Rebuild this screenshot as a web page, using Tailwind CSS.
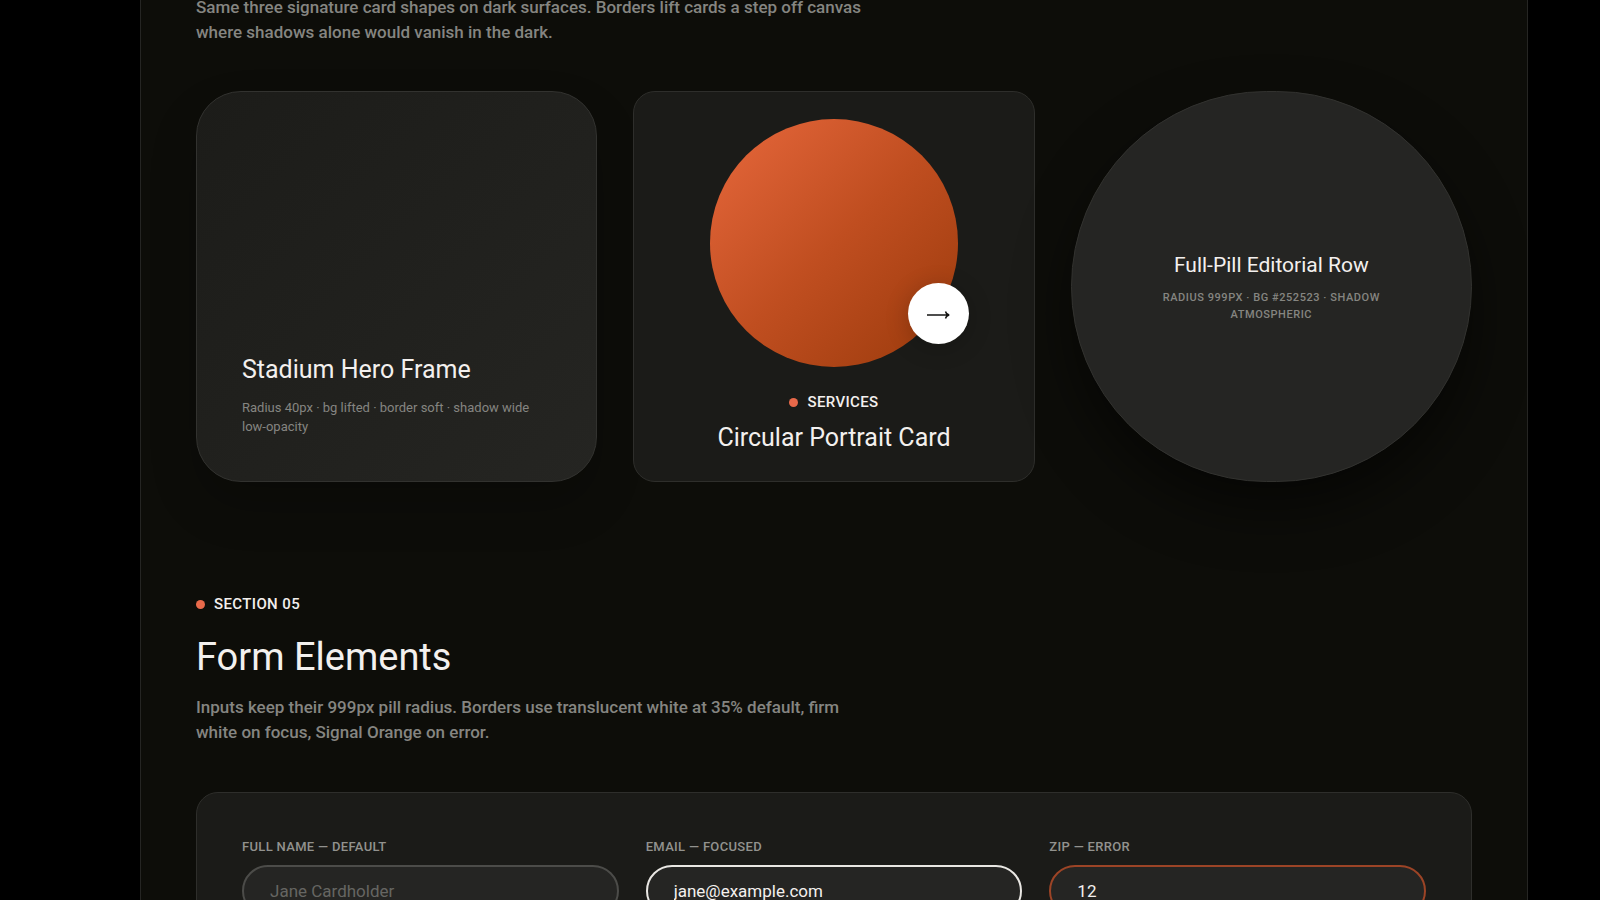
<!DOCTYPE html>
<html lang="en">
<head>
    <meta charset="UTF-8">
    <meta name="viewport" content="width=device-width, initial-scale=1.0">
    <title>Design System - Dark</title>
    <script src="https://cdn.jsdelivr.net/npm/@tailwindcss/browser@4"></script>
</head>
<body class="bg-black font-[Roboto,sans-serif] text-[#f3f0ee] antialiased">
    <main class="ml-[140px] mr-[72px] min-h-screen border-x border-[#252523] bg-[#0d0d09] px-[55px] overflow-hidden">

        <!-- Cards -->
        <section class="-mt-[5px] pb-[113px]">
            <p class="max-w-[680px] mb-[46px] text-[17px] leading-[25px] font-medium text-[#858581]">Same three signature card shapes on dark surfaces. Borders lift cards a step off canvas where shadows alone would vanish in the dark.</p>
            <div class="grid grid-cols-3 gap-9">
                <article class="flex flex-col justify-end rounded-[45px] border border-[#32322f] bg-linear-to-br from-[#1c1c19] to-[#252522] p-[45px] shadow-[0_24px_48px_rgba(0,0,0,0.2)]">
                    <h3 class="mb-3 text-[25px] leading-8">Stadium Hero Frame</h3>
                    <p class="text-[13px] leading-[19px] text-[#858581]">Radius 40px · bg lifted · border soft · shadow wide low-opacity</p>
                </article>
                <article class="flex flex-col items-center rounded-[22px] border border-[#2e2e2b] bg-[#1b1b18] px-[27px] pt-[27px] pb-[25px]">
                    <div class="relative mb-[26px] size-[248px] rounded-full bg-linear-to-br from-[#e8683c] via-[#c04e20] to-[#9a3a0a]">
                        <button type="button" aria-label="Open services" class="absolute bottom-[23px] -right-[11px] flex size-[61px] items-center justify-center rounded-full bg-white shadow-[0_4px_24px_rgba(0,0,0,0.2)]">
                            <svg class="size-6" viewBox="0 0 24 24" fill="none" stroke="#141413" stroke-width="1.4">
                                <path d="M1 13H23M19.500 9.500C20 11.300 21.200 12.600 23.200 13C21.200 13.400 20 14.700 19.500 16.500" />
                                <path d="M20 11L23.200 13L20 15Z" fill="#141413" stroke="none" />
                            </svg>
                        </button>
                    </div>
                    <p class="mb-[9px] flex items-center gap-[9px] text-[15px] leading-[18px] font-medium tracking-wide"><span class="size-[9px] rounded-full bg-[#e8694a]"></span>SERVICES</p>
                    <h3 class="text-[25px] leading-9">Circular Portrait Card</h3>
                </article>
                <article class="flex flex-col items-center justify-center rounded-[999px] border border-[#32322f] bg-[#252523] px-[72px] text-center shadow-[0_27px_54px_rgba(0,0,0,0.5)]">
                    <h3 class="mb-[10px] text-[21px] leading-7">Full-Pill Editorial Row</h3>
                    <p class="text-[11px] leading-[17px] font-medium tracking-wider text-[#858581]">RADIUS 999PX · BG #252523 · SHADOW ATMOSPHERIC</p>
                </article>
            </div>
        </section>

        <!-- Form elements -->
        <section class="pb-28">
            <p class="mb-5 flex items-center gap-[9px] text-[15px] leading-[18px] font-medium tracking-wide"><span class="size-[9px] rounded-full bg-[#e8694a]"></span>SECTION 05</p>
            <h2 class="mb-[14px] text-[38px] leading-12">Form Elements</h2>
            <p class="max-w-[680px] mb-[47px] text-[17px] leading-[25px] font-medium text-[#858581]">Inputs keep their 999px pill radius. Borders use translucent white at 35% default, firm white on focus, Signal Orange on error.</p>
            <form class="grid grid-cols-3 gap-[27px] rounded-[22px] border border-[#2e2e2b] bg-[#1b1b18] p-[45px]">
                <div class="flex flex-col gap-[9px]">
                    <label for="name" class="text-[13px] leading-[18px] font-medium tracking-wide text-[#92928e]">FULL NAME — DEFAULT</label>
                    <input id="name" type="text" placeholder="Jane Cardholder" class="h-[52px] w-full rounded-full border-2 border-[#4c4c49] bg-[#252523] px-[26px] text-[17px] placeholder:text-[#666662]">
                </div>
                <div class="flex flex-col gap-[9px]">
                    <label for="email" class="text-[13px] leading-[18px] font-medium tracking-wide text-[#92928e]">EMAIL — FOCUSED</label>
                    <input id="email" type="email" value="jane@example.com" class="h-[52px] w-full rounded-full border-2 border-[#e9e7e3] bg-[#252523] px-[26px] text-[17px]">
                </div>
                <div class="flex flex-col gap-[9px]">
                    <label for="zip" class="text-[13px] leading-[18px] font-medium tracking-wide text-[#92928e]">ZIP — ERROR</label>
                    <input id="zip" type="text" value="12" class="h-[52px] w-full rounded-full border-2 border-[#9c4426] bg-[#252523] px-[26px] text-[17px]">
                </div>
            </form>
        </section>
    </main>
</body>
</html>
